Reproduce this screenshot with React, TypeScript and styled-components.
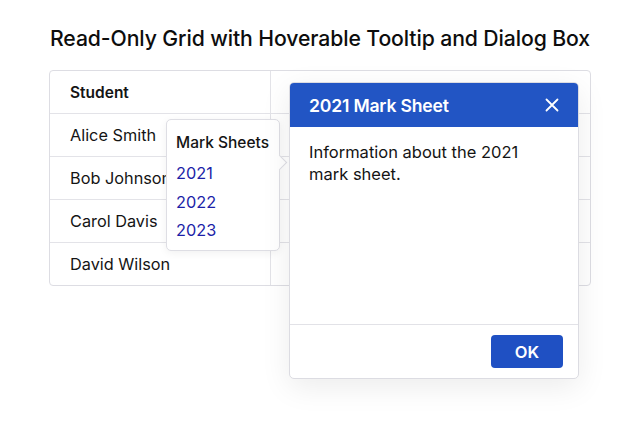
import React from 'react'
import styled, { createGlobalStyle } from 'styled-components'

const GlobalStyle = createGlobalStyle`
    html, body {
        margin: 0;
        padding: 0;
        background: #ffffff;
        font-family: Inter, "Noto Sans", "Liberation Sans", sans-serif;
        color: #111111;
    }
`

const Page = styled.div`
    width: 640px;
    height: 426px;
    box-sizing: border-box;
    padding: 24px 49px 0 49px;
`

const Title = styled.h1`
    margin: 0 0 18px 0;
    text-align: center;
    font-size: 21.2px;
    font-weight: 500;
    line-height: 28px;
    letter-spacing: -0.1px;
    color: #0d0d0d;
`

const Stage = styled.div`
    position: relative;
`

const Grid = styled.div`
    display: grid;
    grid-template-columns: 220px 1fr;
    border: 1px solid #dddde3;
    border-radius: 4px;
    overflow: hidden;
`

const Cell = styled.div<{ $header?: boolean; $last?: boolean; $right?: boolean }>`
    height: 42px;
    display: flex;
    align-items: center;
    padding-left: 20px;
    font-size: ${(p) => (p.$header ? '15.5px' : '16.3px')};
    font-weight: ${(p) => (p.$header ? 600 : 400)};
    color: #141414;
    border-bottom: ${(p) => (p.$last ? 'none' : '1px solid #e3e3e8')};
    border-left: ${(p) => (p.$right ? '1px solid #e3e3e8' : 'none')};
`

const Tooltip = styled.div`
    position: absolute;
    left: 117px;
    top: 49px;
    width: 114px;
    height: 132px;
    box-sizing: border-box;
    padding: 13px 0 0 9px;
    background: #ffffff;
    border: 1px solid #dedee4;
    border-radius: 5px;
    box-shadow: 0 2px 8px rgba(0, 0, 0, 0.06);
`

const TooltipArrow = styled.div`
    position: absolute;
    right: -6px;
    top: 37px;
    width: 10px;
    height: 10px;
    background: #ffffff;
    border-top: 1px solid #dedee4;
    border-right: 1px solid #dedee4;
    transform: rotate(45deg);
`

const TooltipTitle = styled.div`
    font-size: 15.5px;
    font-weight: 500;
    color: #141414;
    line-height: 20px;
    margin-bottom: 10px;
`

const YearLinks = styled.div`
    display: flex;
    flex-direction: column;
    gap: 8.5px;
`

const YearLink = styled.a`
    font-size: 16.3px;
    line-height: 20px;
    color: #1c1fa8;
    text-decoration: none;
    cursor: pointer;
`

const Dialog = styled.div`
    position: absolute;
    left: 240px;
    top: 12px;
    width: 288px;
    height: 295px;
    display: flex;
    flex-direction: column;
    background: #ffffff;
    border: 1px solid #dcdce2;
    border-radius: 5px;
    overflow: hidden;
    box-shadow: 0 8px 30px rgba(0, 0, 0, 0.08);
`

const DialogHeader = styled.div`
    height: 44px;
    flex-shrink: 0;
    display: flex;
    align-items: center;
    justify-content: space-between;
    padding: 0 15px 0 19px;
    background: #2255c4;
    color: #ffffff;
`

const DialogTitle = styled.div`
    font-size: 17.6px;
    font-weight: 600;
    letter-spacing: -0.2px;
`

const CloseButton = styled.button`
    border: none;
    background: transparent;
    padding: 4px;
    display: flex;
    align-items: center;
    justify-content: center;
    cursor: pointer;
`

const DialogBody = styled.div`
    flex: 1;
    padding: 14px 50px 0 19px;
    font-size: 16.5px;
    line-height: 22px;
    color: #141414;
`

const DialogFooter = styled.div`
    height: 53px;
    flex-shrink: 0;
    display: flex;
    align-items: center;
    justify-content: flex-end;
    padding: 0 15px;
    border-top: 1px solid #e2e2e7;
`

const OkButton = styled.button`
    width: 72px;
    height: 33px;
    border: none;
    border-radius: 4px;
    background: #1f50c3;
    color: #ffffff;
    font-family: inherit;
    font-size: 16.5px;
    font-weight: 600;
    cursor: pointer;
`

const students = ['Alice Smith', 'Bob Johnson', 'Carol Davis', 'David Wilson']

export default function App(): JSX.Element {
    return (
        <>
            <GlobalStyle />
            <Page>
                <Title>Read-Only Grid with Hoverable Tooltip and Dialog Box</Title>
                <Stage>
                    <Grid>
                        <Cell $header>Student</Cell>
                        <Cell $header $right />
                        {students.map((name, i) => (
                            <React.Fragment key={name}>
                                <Cell $last={i === students.length - 1}>{name}</Cell>
                                <Cell $right $last={i === students.length - 1} />
                            </React.Fragment>
                        ))}
                    </Grid>

                    <Tooltip>
                        <TooltipArrow />
                        <TooltipTitle>Mark Sheets</TooltipTitle>
                        <YearLinks>
                            <YearLink>2021</YearLink>
                            <YearLink>2022</YearLink>
                            <YearLink>2023</YearLink>
                        </YearLinks>
                    </Tooltip>

                    <Dialog>
                        <DialogHeader>
                            <DialogTitle>2021 Mark Sheet</DialogTitle>
                            <CloseButton aria-label="Close">
                                <svg width="14" height="14" viewBox="0 0 14 14">
                                    <path d="M1.5 1.5 L12.5 12.5 M12.5 1.5 L1.5 12.5" stroke="#ffffff" strokeWidth="1.8" strokeLinecap="round" />
                                </svg>
                            </CloseButton>
                        </DialogHeader>
                        <DialogBody>Information about the 2021 mark sheet.</DialogBody>
                        <DialogFooter>
                            <OkButton>OK</OkButton>
                        </DialogFooter>
                    </Dialog>
                </Stage>
            </Page>
        </>
    )
}
